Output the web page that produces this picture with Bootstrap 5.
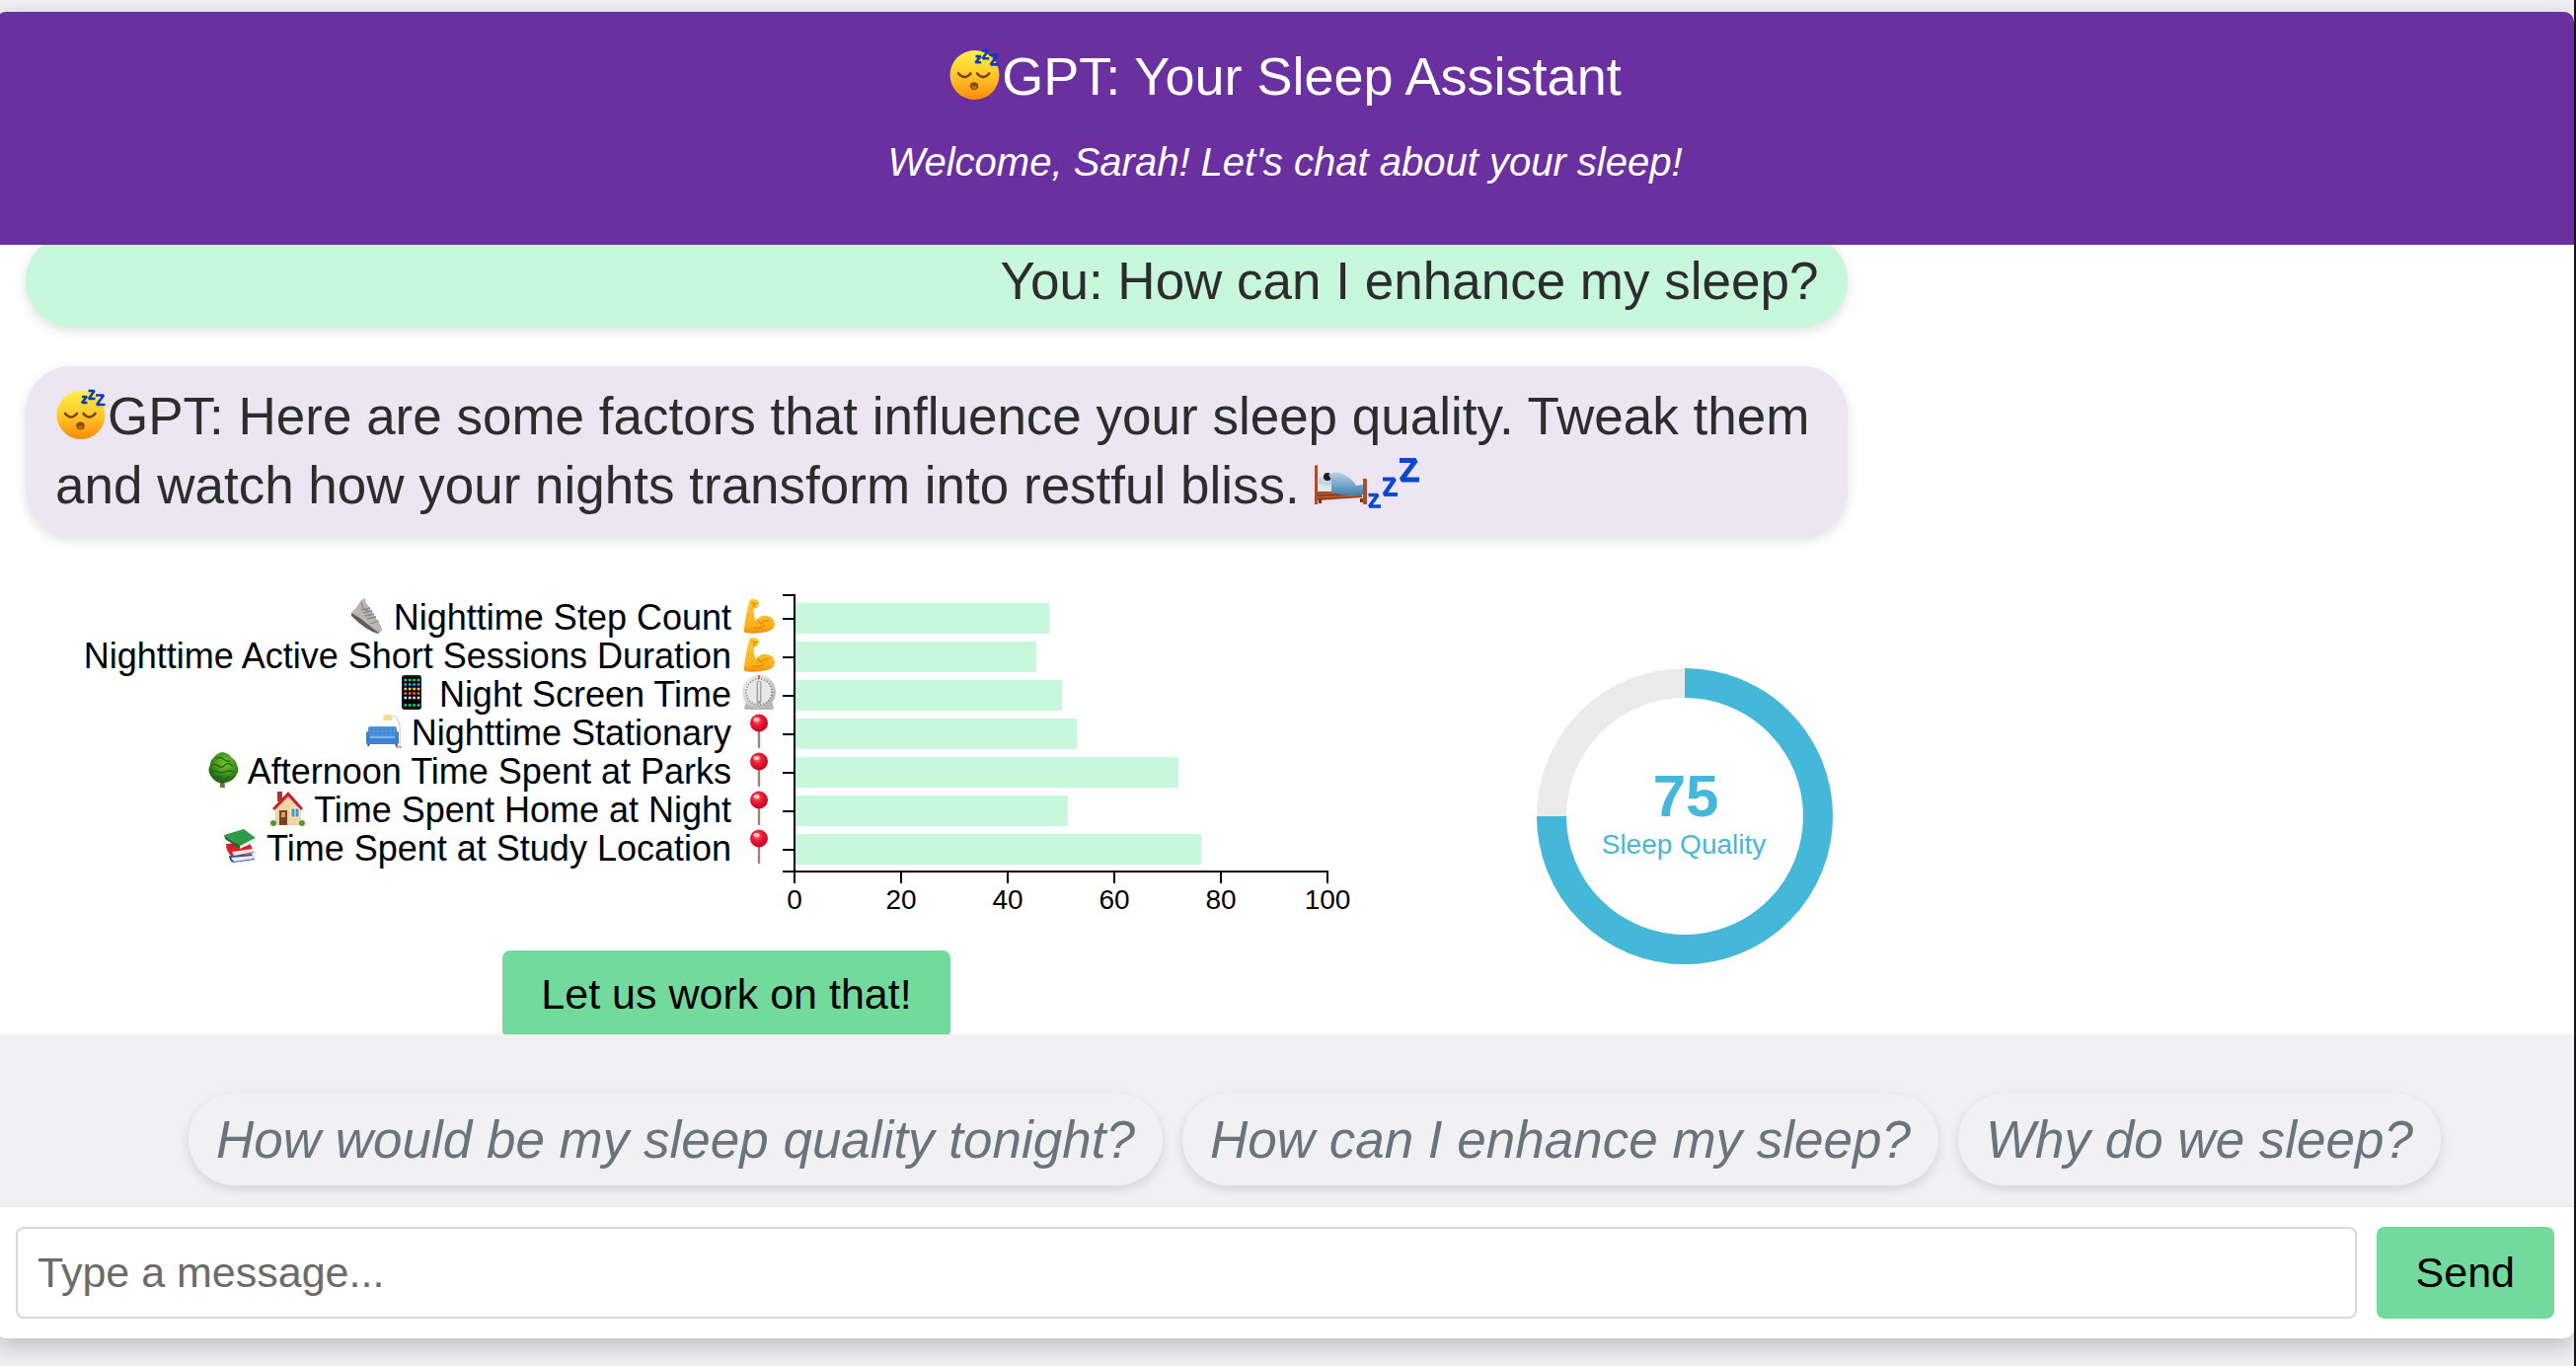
<!DOCTYPE html>
<html lang="en">
<head>
<meta charset="utf-8">
<meta name="viewport" content="width=device-width, initial-scale=1">
<title>Sleep Assistant</title>
<link href="https://cdn.jsdelivr.net/npm/bootstrap@5.3.0/dist/css/bootstrap.min.css" rel="stylesheet">
<style>
  :root { --mint: #c8f8dc; --green: #72da9d; --blue: #45b7d8; }
  body {
    font-family: "Liberation Sans", Arial, sans-serif;
    background: #f0f0f2;
    border-right: 2px solid #141416;
    height: 100vh;
    padding: 12px 0 28px;
    overflow: hidden;
    color: #000;
  }
  .app-shell {
    height: 100%;
    margin-left: -4px;
    border-radius: 10px;
    background: #fff;
    box-shadow: 0 8px 24px rgba(0,0,0,.22);
  }
  .app-head {
    background: #6a309f;
    color: #fff;
    padding: 30px 16px 58px;
    gap: 26px;
    border-radius: 10px 10px 0 0;
  }
  .app-title { font-size: 54px; line-height: 70px; font-weight: 400; }
  .app-sub { font-size: 40px; line-height: 52px; }
  .emo { width: 1em; height: 1em; vertical-align: -6px; overflow: visible; }
  .chat-log { padding: 0 30px; min-height: 0; }
  .thread { margin-top: -10px; }
  .bubble {
    box-sizing: content-box;
    width: 70%;
    padding: 16px 30px;
    margin-bottom: 40px;
    border-radius: 46px;
    font-size: 53px;
    line-height: 70px;
    color: #2d2d2d;
    box-shadow: 0 4px 12px rgba(0,0,0,.13);
  }
  .bubble-user { background: var(--mint); line-height: 61px; }
  .bubble-bot { background: #ece6f2; }
  .insight { width: calc(70% + 60px); margin-top: 59px; }
  .factors { width: 1420px; }
  .chart { padding-right: 100px; }
  .f-labels { padding: 4px 6px 0 0; font-size: 36px; line-height: 39px; }
  .f-labels .emo { vertical-align: -4px; }
  .f-ticks { width: 13px; height: 282px; border: 2px solid #000; border-left: 0; padding-top: 3px; }
  .f-ticks i { height: 39px; }
  .f-ticks i::before { content: ""; width: 100%; height: 2px; background: #000; }
  .f-plot { width: 540px; }
  .f-bars { height: 282px; border-bottom: 2px solid #000; padding-top: 9px; gap: 8px; }
  .f-bars div { height: 31px; background: var(--mint); }
  .f-axis { margin: 0 -53px 0 -55px; font-size: 28px; line-height: 34px; }
  .f-axis span { width: 108px; }
  .f-axis span::before { content: ""; width: 2px; height: 11px; background: #000; }
  .btn-mint {
    --bs-btn-bg: var(--green); --bs-btn-hover-bg: #5fcb8c; --bs-btn-active-bg: #52bd7f;
    --bs-btn-color: #000; --bs-btn-border-width: 0px;
    --bs-btn-padding-x: 40px; --bs-btn-padding-y: 0px;
    --bs-btn-border-radius: 8px; --bs-btn-font-size: 43px;
    line-height: 89px;
  }
  .btn-work { margin-top: 34px; --bs-btn-padding-x: 39px; }
  .gauge { width: 300px; margin-right: 15px; }
  .suggest { background: #f1f1f4; padding: 60px 0 20px 60px; gap: 20px; border-bottom: 2px solid #ebebeb; }
  .pill {
    --bs-btn-color: #6a747c; --bs-btn-bg: #f1f1f4; --bs-btn-hover-bg: #e7e7eb; --bs-btn-hover-color: #555e66;
    --bs-btn-border-width: 0px; --bs-btn-padding-x: 28px; --bs-btn-padding-y: 0px;
    --bs-btn-font-size: 53px; --bs-btn-border-radius: 46px;
    line-height: 93px;
    box-shadow: 0 4px 12px rgba(0,0,0,.13);
  }
  .composer { padding: 20px; gap: 20px; }
  .composer .form-control {
    height: 93px; padding: 0 20px; font-size: 43px;
    border: 2px solid #d8d8d8; border-radius: 8px; background: #fff;
  }
  .composer .form-control::placeholder { color: #6b6b6b; }
  .composer .btn { line-height: 93px; }
</style>
<script src="https://cdn.jsdelivr.net/npm/bootstrap@5.3.0/dist/js/bootstrap.bundle.min.js"></script>
</head>
<body>
<svg width="0" height="0" class="position-absolute" aria-hidden="true">
  <defs>
    <linearGradient id="gFace" x1="0" y1="0" x2="0" y2="1"><stop offset="0" stop-color="#fff04a"/><stop offset=".5" stop-color="#ffc92a"/><stop offset="1" stop-color="#ff8a0a"/></linearGradient>
    <linearGradient id="gArm" x1="0" y1="0" x2="0" y2="1"><stop offset="0" stop-color="#ffc83a"/><stop offset=".8" stop-color="#ffb01c"/><stop offset="1" stop-color="#f08a00"/></linearGradient>
    <linearGradient id="gBlanket" x1="0" y1="0" x2="0" y2="1"><stop offset="0" stop-color="#b7d2e8"/><stop offset="1" stop-color="#3f7fae"/></linearGradient>
    <linearGradient id="gDial" x1="0" y1="0" x2="1" y2="1"><stop offset="0" stop-color="#f4f4f4"/><stop offset="1" stop-color="#a9a9a9"/></linearGradient>
    <radialGradient id="gPin" cx=".4" cy=".35" r=".65"><stop offset="0" stop-color="#ff8a8a"/><stop offset=".4" stop-color="#ee2038"/><stop offset="1" stop-color="#c4001c"/></radialGradient>
    <radialGradient id="gTree" cx=".55" cy=".35" r=".65"><stop offset="0" stop-color="#7cc32e"/><stop offset=".6" stop-color="#3f8f1d"/><stop offset="1" stop-color="#1f5c10"/></radialGradient>
    <symbol id="e-sleep" viewBox="0 0 53 53">
      <circle cx="26" cy="27.500" r="24.500" fill="url(#gFace)"/>
      <path d="M10 26q6 7 12 0M28.500 26q6 7 12 0" fill="none" stroke="#7a4300" stroke-width="2.600" stroke-linecap="round"/>
      <ellipse cx="25.500" cy="38.500" rx="4.200" ry="4" fill="#8a4b05"/><ellipse cx="25.500" cy="40" rx="2.600" ry="2" fill="#b96a1c"/>
      <path d="M27 9h5l-5 6h5.500M33.500 3h6l-5.500 8h6.500M41 7.500h8l-7 9.500h8.500" fill="none" stroke="#0a3fc0" stroke-width="2.600" stroke-linejoin="bevel"/>
    </symbol>
    <symbol id="e-bed" viewBox="0 0 53 53">
      <path d="M0 9q3-2 3 0v39H0z" fill="#a8502c"/>
      <path d="M3 34l45-2v9l-45 3z" fill="#96401f"/><path d="M3 37l45-1.500M3 41l45-2" stroke="#c06a40" stroke-width="1"/>
      <path d="M3 27h16v8H3z" fill="#dfe9f2"/><path d="M4 21l9-1 6 5-5 5-11-3z" fill="#c5d6e4"/>
      <circle cx="13" cy="20" r="4" fill="#1f1b1c"/>
      <path d="M14 18q8-5 16 0 9 5 12 11l7-1v10q-14 3-32 -2V28q0-6-3-10z" fill="url(#gBlanket)"/>
      <path d="M49 22q4-1 4 1v25h-4z" fill="#a8502c"/><path d="M4 43h3v4H4zM46 42h3v4h-3z" fill="#7c3317"/>
    </symbol>
    <symbol id="e-zzz" viewBox="0 0 53 53">
      <g fill="none" stroke="#0a48d0" stroke-linejoin="bevel"><path d="M1.500 38.500h9.500L2.500 50H14" stroke-width="3.600"/><path d="M16 22.500h12L17.500 38H31" stroke-width="4.200"/><path d="M33 3.500h16.500L35 23h18" stroke-width="5"/></g>
    </symbol>
    <symbol id="e-shoe" viewBox="0 0 36 36">
      <path d="M3 15q6-6 10-13l4-2q0 5 4 9l12 19q3 6-2 7l-6-2Q12 27 3 15z" fill="#b9b6b3"/>
      <path d="M3 15q8 4 16 11 7 6 12 9l-1 1Q18 33 3 18z" fill="#5e5b59"/>
      <path d="M13 4q1 8 7 9M13 12l9-2M15 15l9-2M17 18l9-2M19 21l9-2M22 26l9-3" fill="none" stroke="#8a8784" stroke-width="1.300"/>
    </symbol>
    <symbol id="e-arm" viewBox="0 0 36 36">
      <path d="M8 4q1-4 5-3 5 1 5 4l-1 4-4 2q-1 7 2 12 4-6 11-5 7 1 8 8 0 6-8 8-13 3-22 1-2-1-1-5Q5 15 8 4z" fill="url(#gArm)"/>
      <path d="M10 4l4 2 3-1M13 6v4M16 22l4 4q3-4 8-3M12 30q8 1 12-3" fill="none" stroke="#e08b08" stroke-width="1.300"/>
    </symbol>
    <symbol id="e-phone" viewBox="0 0 36 36">
      <rect x="8" y="0" width="20" height="35" rx="3" fill="#1a1a1c"/><rect x="9.500" y="2" width="17" height="31" rx="2" fill="#05070b"/>
      <g stroke-width="2.400" fill="none" stroke-dasharray="2.600 1.800">
        <path d="M10.500 5h16" stroke="#3cd05a"/><path d="M10.500 9.500h16" stroke="#3aa0ff"/><path d="M10.500 14h16" stroke="#ffcf2e"/><path d="M10.500 18.500h16" stroke="#ff5a4a"/><path d="M10.500 23h16" stroke="#e6e6e6"/><path d="M10.500 30.500h16" stroke="#34d17a"/>
      </g>
    </symbol>
    <symbol id="e-dial" viewBox="0 0 36 36">
      <path d="M6 24l-3 9q0 2 3 2h24q3 0 3-2l-3-9z" fill="#b8b8b8"/>
      <circle cx="18" cy="17" r="17" fill="url(#gDial)"/><circle cx="18" cy="17" r="13" fill="#e8e8e8" stroke="#777" stroke-width="1.500" stroke-dasharray="1 2"/>
      <rect x="15.500" y="6" width="5" height="23" rx="2" fill="#a5a5a5"/><path d="M18 7v19" stroke="#f7f7f7" stroke-width="1.500"/><path d="M18 0v4" stroke="#e2344a" stroke-width="1.500"/>
    </symbol>
    <symbol id="e-sofa" viewBox="0 0 36 36">
      <path d="M24 3q8-4 10 10 1 10 0 20" fill="none" stroke="#d8d5cf" stroke-width="1.400"/><path d="M30 34h6" stroke="#b9b4aa" stroke-width="2"/>
      <path d="M18 1h7l2 6h-10z" fill="#f9dd8e"/>
      <path d="M2 33l1-3M31 33l-1-3" stroke="#6b3d1f" stroke-width="2"/>
      <rect x="2" y="13" width="29" height="15" rx="2" fill="#4d90dc"/><path d="M0 19q0-1 3-1l1 6h25l1-6q3 0 3 1v11q0 1-2 1H2q-2 0-2-1z" fill="#3b82d4"/><path d="M4 24h25" stroke="#7db4ee" stroke-width="2"/>
      <path d="M5 16h24M5 20h24" stroke="#2a64ad" stroke-width="1.200" stroke-dasharray="1.200 3"/>
    </symbol>
    <symbol id="e-tree" viewBox="0 0 36 36">
      <path d="M16 25h4l1 11h-5z" fill="#8a6a2a"/>
      <path d="M18 0q7 1 9 5 5 3 6 8 3 6-1 11-4 6-11 7-3 1-6 0-6-2-9-8-3-5 0-10 0-5 4-8 3-4 8-5z" fill="url(#gTree)"/>
      <path d="M12 7q4-3 7 0t7 2M7 14q4-3 7 0t7-1 8 2M6 20q5-2 8 0t7 0 9 0M12 26q4-3 6 0t7-1" fill="none" stroke="#24651a" stroke-width="1.300"/>
    </symbol>
    <symbol id="e-home" viewBox="0 0 36 36">
      <path d="M8 1h5v10H8z" fill="#b3312c"/><path d="M6 16L19 3l13 14v18H6z" fill="#f2d3a2"/>
      <path d="M3 18L19 1l15 17-2 2L19 6 5 20z" fill="#c4262b"/>
      <rect x="10" y="20" width="8" height="15" fill="#7b3f22"/><rect x="12" y="22" width="4" height="5" fill="#d9a066"/><rect x="22" y="18" width="8" height="9" fill="#3f93c8" stroke="#fff0d4" stroke-width="1"/><path d="M26 18v9" stroke="#fff0d4"/>
      <circle cx="4" cy="33" r="3" fill="#4d9a34"/><circle cx="33" cy="33" r="3" fill="#4d9a34"/>
    </symbol>
    <symbol id="e-books" viewBox="0 0 36 36">
      <path d="M7 27l23-2 3 6-22 3q-4-2-4-7z" fill="#2456a8"/><path d="M9 29l22-2 1 3-20 3z" fill="#e8ecf3"/>
      <path d="M4 15l24-2 4 11-22 4q-6-5-6-13z" fill="#d61f2c"/><path d="M10 23l21-3 1 3-20 4z" fill="#f3e9e2"/>
      <path d="M2 6L22 0l12 9-16 8z" fill="#2f9a47"/><path d="M2 6l16 11v3L3 10z" fill="#17702f"/><path d="M18 17l16-8v4l-16 7z" fill="#e9efe6"/>
    </symbol>
    <symbol id="e-pin" viewBox="0 0 36 36">
      <path d="M18 16v18" stroke="#9a8480" stroke-width="2.400" stroke-linecap="round"/><circle cx="18" cy="9.500" r="9" fill="url(#gPin)"/><ellipse cx="15.500" cy="6" rx="3" ry="2" fill="#ffc4c4"/>
    </symbol>
  </defs>
</svg>

<main class="app-shell d-flex flex-column overflow-visible">
  <header class="app-head d-flex flex-column align-items-center text-center">
    <h1 class="app-title m-0"><svg class="emo" role="img" aria-label="sleeping face"><use href="#e-sleep"/></svg>GPT: Your Sleep Assistant</h1>
    <p class="app-sub fst-italic m-0">Welcome, Sarah! Let's chat about your sleep!</p>
  </header>

  <section class="chat-log flex-grow-1 overflow-hidden" aria-label="Conversation">
    <div class="thread">
      <div class="bubble bubble-user text-end">You: How can I enhance my sleep?</div>
      <div class="bubble bubble-bot"><svg class="emo" role="img" aria-label="sleeping face"><use href="#e-sleep"/></svg>GPT: Here are some factors that influence your sleep quality. Tweak them and watch how your nights transform into restful bliss. <svg class="emo" role="img" aria-label="person in bed"><use href="#e-bed"/></svg><svg class="emo" role="img" aria-label="zzz"><use href="#e-zzz"/></svg></div>

      <div class="insight d-flex justify-content-between align-items-center">
        <div class="factors d-flex flex-column align-items-center">
          <div class="chart d-flex w-100">
            <div class="f-labels flex-grow-1 text-end text-nowrap">
              <div><svg class="emo"><use href="#e-shoe"/></svg> Nighttime Step Count <svg class="emo"><use href="#e-arm"/></svg></div>
              <div>Nighttime Active Short Sessions Duration <svg class="emo"><use href="#e-arm"/></svg></div>
              <div><svg class="emo"><use href="#e-phone"/></svg> Night Screen Time <svg class="emo"><use href="#e-dial"/></svg></div>
              <div><svg class="emo"><use href="#e-sofa"/></svg> Nighttime Stationary <svg class="emo"><use href="#e-pin"/></svg></div>
              <div><svg class="emo"><use href="#e-tree"/></svg> Afternoon Time Spent at Parks <svg class="emo"><use href="#e-pin"/></svg></div>
              <div><svg class="emo"><use href="#e-home"/></svg> Time Spent Home at Night <svg class="emo"><use href="#e-pin"/></svg></div>
              <div><svg class="emo"><use href="#e-books"/></svg> Time Spent at Study Location <svg class="emo"><use href="#e-pin"/></svg></div>
            </div>
            <div class="f-ticks flex-shrink-0">
              <i class="d-flex align-items-center"></i><i class="d-flex align-items-center"></i><i class="d-flex align-items-center"></i><i class="d-flex align-items-center"></i><i class="d-flex align-items-center"></i><i class="d-flex align-items-center"></i><i class="d-flex align-items-center"></i>
            </div>
            <div class="f-plot flex-shrink-0">
              <div class="f-bars d-flex flex-column">
                <div style="width:47.6%"></div>
                <div style="width:45.2%"></div>
                <div style="width:50%"></div>
                <div style="width:52.8%"></div>
                <div style="width:71.8%"></div>
                <div style="width:51.1%"></div>
                <div style="width:76.1%"></div>
              </div>
              <div class="f-axis d-flex">
                <span class="d-flex flex-column align-items-center">0</span>
                <span class="d-flex flex-column align-items-center">20</span>
                <span class="d-flex flex-column align-items-center">40</span>
                <span class="d-flex flex-column align-items-center">60</span>
                <span class="d-flex flex-column align-items-center">80</span>
                <span class="d-flex flex-column align-items-center">100</span>
              </div>
            </div>
          </div>
          <button type="button" class="btn btn-mint btn-work">Let us work on that!</button>
        </div>
        <svg class="gauge flex-shrink-0" viewBox="0 0 300 300" role="img" aria-label="Sleep Quality 75">
          <circle cx="150" cy="150" r="135" fill="none" stroke="#ebebeb" stroke-width="30"/>
          <path d="M150 15A135 135 0 1 1 15 150" fill="none" stroke="#45b7d8" stroke-width="30"/>
          <text x="151" y="150" text-anchor="middle" font-size="60" font-weight="700" fill="#45b7d8">75</text>
          <text x="149" y="188" text-anchor="middle" font-size="28" fill="#45b7d8">Sleep Quality</text>
        </svg>
      </div>
    </div>
  </section>

  <section class="suggest d-flex justify-content-center flex-shrink-0" aria-label="Suggested questions">
    <button type="button" class="btn pill fst-italic">How would be my sleep quality tonight?</button>
    <button type="button" class="btn pill fst-italic">How can I enhance my sleep?</button>
    <button type="button" class="btn pill fst-italic">Why do we sleep?</button>
  </section>

  <form class="composer d-flex flex-shrink-0">
    <label for="msg" class="visually-hidden">Message</label>
    <input id="msg" type="text" class="form-control" placeholder="Type a message...">
    <button type="button" class="btn btn-mint">Send</button>
  </form>
</main>
</body>
</html>
